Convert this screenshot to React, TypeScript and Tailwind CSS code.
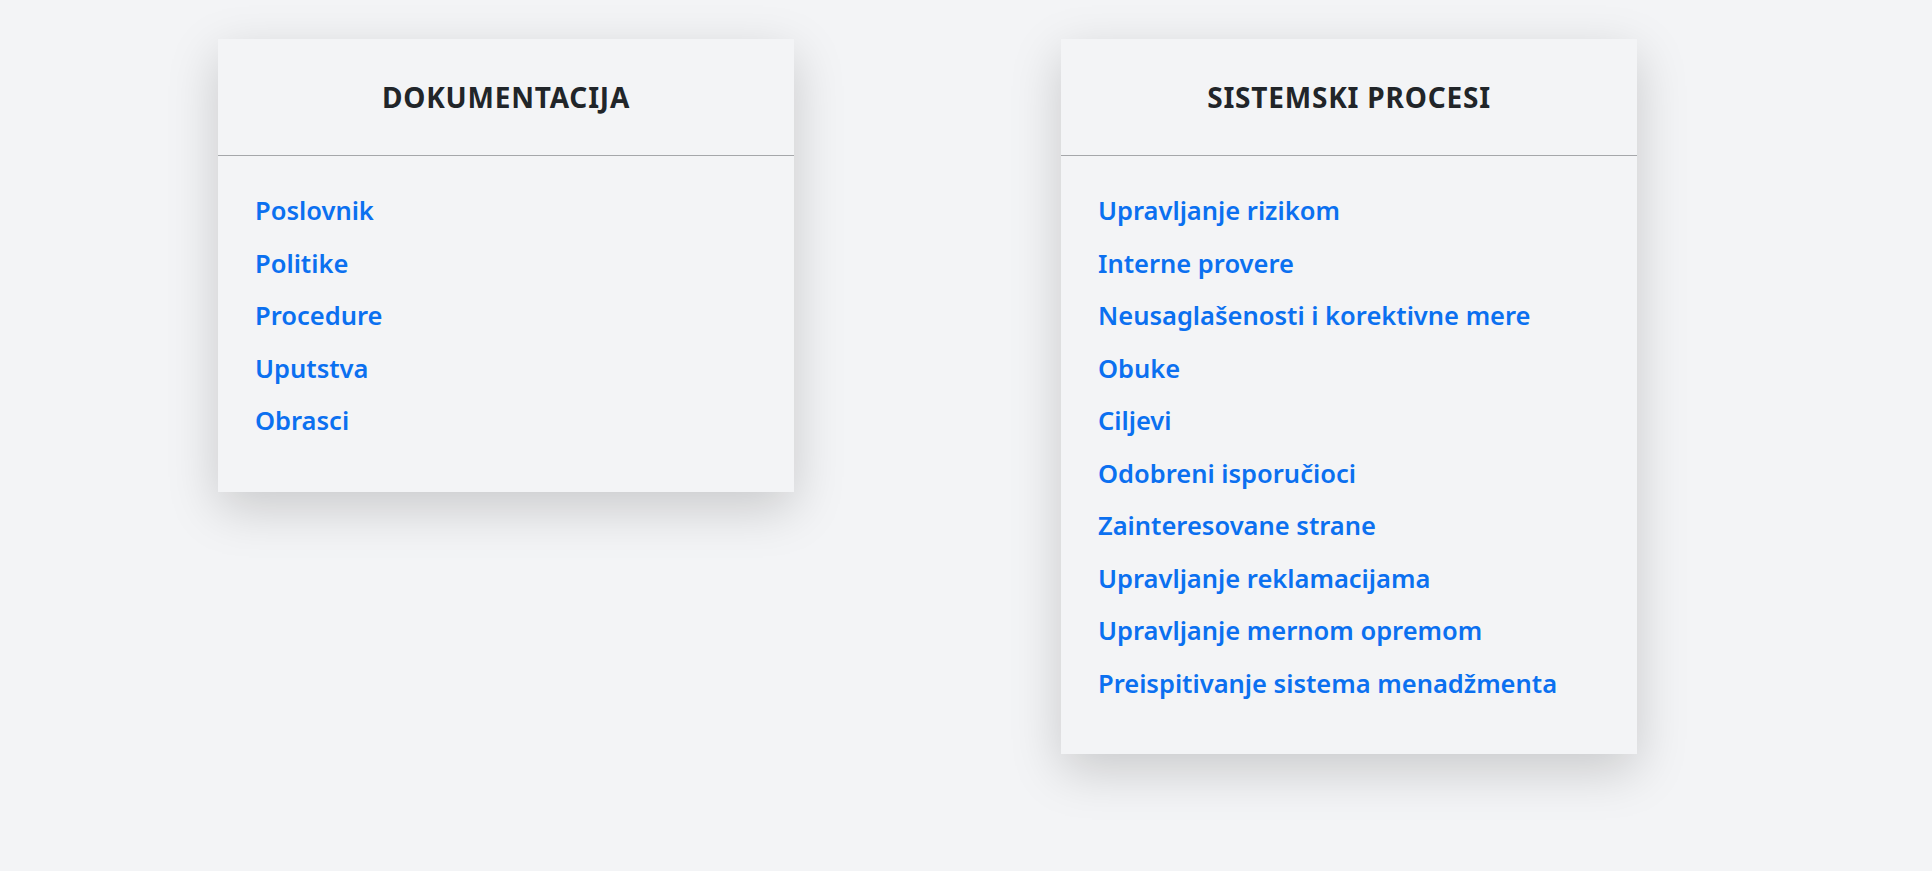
const dokumentacija = ["Poslovnik", "Politike", "Procedure", "Uputstva", "Obrasci"];

const procesi = [
  "Upravljanje rizikom",
  "Interne provere",
  "Neusaglašenosti i korektivne mere",
  "Obuke",
  "Ciljevi",
  "Odobreni isporučioci",
  "Zainteresovane strane",
  "Upravljanje reklamacijama",
  "Upravljanje mernom opremom",
  "Preispitivanje sistema menadžmenta",
];

function LinkCard({ title, items }: { title: string; items: string[] }) {
  return (
    <div className="w-[576px] shrink-0 self-start bg-[#f3f4f6] shadow-[0_16px_48px_rgba(0,0,0,0.175)]">
      <div className="flex h-[117px] items-center justify-center border-b border-[#a5a7aa]">
        <h3 className="text-[28px] font-bold leading-none tracking-[0.8px] text-[#212529]">{title}</h3>
      </div>
      <ul className="px-[37px] pb-[45px] pt-[28px]">
        {items.map((item) => (
          <li key={item} className="text-[25.5px] font-semibold leading-[52.5px]">
            <a href="#" className="text-[#0b70f0] no-underline">
              {item}
            </a>
          </li>
        ))}
      </ul>
    </div>
  );
}

export default function App() {
  return (
    <div
      className="min-h-[871px] bg-[#f3f4f6]"
      style={{ fontFamily: '"Noto Sans", "Open Sans", sans-serif' }}
    >
      <div className="flex gap-[267px] pl-[218px] pt-[39px]">
        <LinkCard title="DOKUMENTACIJA" items={dokumentacija} />
        <LinkCard title="SISTEMSKI PROCESI" items={procesi} />
      </div>
    </div>
  );
}
